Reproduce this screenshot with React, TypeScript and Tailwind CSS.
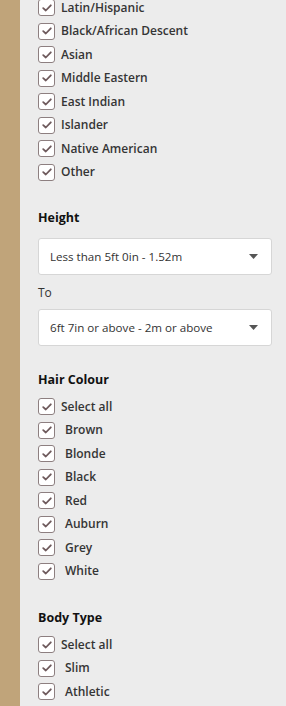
const ethnicity = ['Latin/Hispanic', 'Black/African Descent', 'Asian', 'Middle Eastern', 'East Indian', 'Islander', 'Native American', 'Other'];
const hair = ['Select all', 'Brown', 'Blonde', 'Black', 'Red', 'Auburn', 'Grey', 'White'];
const body = ['Select all', 'Slim', 'Athletic'];

function Check({ label, indent }: { label: string; indent?: boolean }) {
  return (
    <label className="flex items-center h-[23.5px]">
      <span className="w-[17px] h-[17px] shrink-0 rounded-[3px] border-[1.5px] border-[#8d7f80] bg-white flex items-center justify-center">
        <svg width="10" height="8" viewBox="0 0 10 8" fill="none">
          <path d="M1.2 4.1 L3.8 6.5 L8.8 1.3" stroke="#6e5a5c" strokeWidth="1.8" strokeLinecap="round" strokeLinejoin="round" />
        </svg>
      </span>
      <span className={`text-[12px] font-semibold text-[#353535] ${indent ? 'ml-[10px]' : 'ml-[6px]'}`}>{label}</span>
    </label>
  );
}

function Select({ value }: { value: string }) {
  return (
    <div className="h-[37px] bg-white border border-[#d6d6d6] rounded-[3px] flex items-center justify-between pl-[11px] pr-[13px]">
      <span className="text-[11.6px] text-[#333]">{value}</span>
      <svg width="9" height="5" viewBox="0 0 9 5">
        <path d="M0 0 L9 0 L4.5 5 Z" fill="#555" />
      </svg>
    </div>
  );
}

export default function App() {
  return (
    <div className="flex w-[286px] h-[706px] overflow-hidden bg-[#ececec]" style={{ fontFamily: '"Open Sans", sans-serif' }}>
      <div className="w-5 shrink-0 bg-[#c0a47a]" />
      <div className="flex-1 pl-[18px] pr-[14px]">
        <div className="-mt-[4px]">
          {ethnicity.map((e) => (
            <Check key={e} label={e} />
          ))}
        </div>

        <h3 className="mt-[24px] text-[12.5px] font-bold text-[#111] leading-5">Height</h3>
        <div className="mt-[10px]">
          <Select value="Less than 5ft 0in - 1.52m" />
        </div>
        <div className="mt-[9px] text-[12px] text-[#333] leading-[18px]">To</div>
        <div className="mt-[7px]">
          <Select value="6ft 7in or above - 2m or above" />
        </div>

        <h3 className="mt-[24px] text-[12.5px] font-bold text-[#111] leading-5">Hair Colour</h3>
        <div className="mt-[5px]">
          {hair.map((h, i) => (
            <Check key={h} label={h} indent={i > 0} />
          ))}
        </div>

        <h3 className="mt-[25px] text-[12.5px] font-bold text-[#111] leading-5">Body Type</h3>
        <div className="mt-[5px]">
          {body.map((b, i) => (
            <Check key={b} label={b} indent={i > 0} />
          ))}
        </div>
      </div>
    </div>
  );
}
